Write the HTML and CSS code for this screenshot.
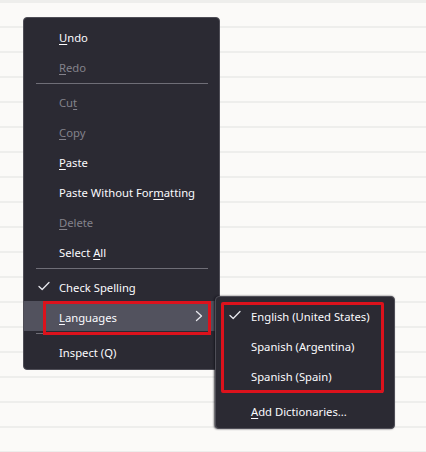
FILE: index.html
```html
<!DOCTYPE html>
<html lang="en">
<head>
<meta charset="utf-8">
<title>Context menu</title>
<link rel="stylesheet" href="styles.css">
</head>
<body>
<div class="canvas">
  <div class="menu main-menu">
    <div class="item"><span class="icon"></span><span class="label"><u>U</u>ndo</span></div>
    <div class="item disabled"><span class="icon"></span><span class="label"><u>R</u>edo</span></div>
    <div class="sep"></div>
    <div class="item disabled"><span class="icon"></span><span class="label">Cu<u>t</u></span></div>
    <div class="item disabled"><span class="icon"></span><span class="label"><u>C</u>opy</span></div>
    <div class="item"><span class="icon"></span><span class="label"><u>P</u>aste</span></div>
    <div class="item"><span class="icon"></span><span class="label">Paste Without For<u>m</u>atting</span></div>
    <div class="item disabled"><span class="icon"></span><span class="label"><u>D</u>elete</span></div>
    <div class="item"><span class="icon"></span><span class="label">Select <u>A</u>ll</span></div>
    <div class="sep"></div>
    <div class="item"><span class="icon"><svg class="check" width="12" height="12" viewBox="0 0 12 12"><polyline points="1,6.5 4.2,9.5 11,2.5"/></svg></span><span class="label">Check Spelling</span></div>
    <div class="item active marked"><span class="icon"></span><span class="label"><u>L</u>anguages</span><svg class="chevron" width="8" height="12" viewBox="0 0 8 12"><polyline points="1.5,1.5 6.5,6 1.5,10.5"/></svg></div>
    <div class="sep"></div>
    <div class="item"><span class="icon"></span><span class="label">Inspect (Q)</span></div>
  </div>

  <div class="menu sub-menu">
    <div class="group marked-group">
      <div class="item"><span class="icon"><svg class="check" width="12" height="12" viewBox="0 0 12 12"><polyline points="1,6.5 4.2,9.5 11,2.5"/></svg></span><span class="label">English (United States)</span></div>
      <div class="item"><span class="icon"></span><span class="label">Spanish (Argentina)</span></div>
      <div class="item"><span class="icon"></span><span class="label">Spanish (Spain)</span></div>
    </div>
    <div class="sep"></div>
    <div class="item"><span class="icon"></span><span class="label"><u>A</u>dd Dictionaries...</span></div>
  </div>
</div>
</body>
</html>
```
FILE: styles.css
```css
html, body {
  margin: 0;
  padding: 0;
}
body {
  width: 426px;
  height: 452px;
  overflow: hidden;
  background-color: #fbfaf8;
  background-image: repeating-linear-gradient(to bottom, #eeeeec 0, #eeeeec 2px, transparent 2px, transparent 25px);
  background-position: 0 1px;
  font-family: "Noto Sans", "Open Sans", sans-serif;
  font-size: 11.25px;
}
.canvas {
  position: relative;
  width: 426px;
  height: 452px;
}
.menu {
  position: absolute;
  box-sizing: border-box;
  background: #2b2a33;
  border: 1px solid #4f4e57;
  border-radius: 4px;
  padding: 3px 0;
  color: #fbfbfe;
  display: flex;
  flex-direction: column;
}
.main-menu {
  left: 23px;
  top: 17px;
  width: 197px;
}
.sub-menu {
  left: 215px;
  top: 296px;
  width: 180px;
  box-shadow: -1px 0 2px rgba(20, 19, 26, 0.8);
}
.item {
  position: relative;
  display: flex;
  align-items: center;
  height: 30px;
  padding-right: 16px;
  white-space: nowrap;
}
.item .icon {
  width: 35px;
  flex: 0 0 35px;
  box-sizing: border-box;
  padding-left: 14px;
  display: flex;
  align-items: center;
}
.sub-menu .item .icon {
  padding-left: 13px;
}
.item .label {
  flex: 1;
  line-height: 16px;
  padding-top: 3px;
}
.item u {
  text-decoration-thickness: 1px;
  text-underline-offset: 2px;
}
.item.disabled {
  color: #83828b;
}
.item.active {
  background: #52525e;
}
.check polyline,
.chevron polyline {
  fill: none;
  stroke: #e8e8ee;
  stroke-width: 1.3;
  stroke-linecap: round;
  stroke-linejoin: round;
}
.chevron {
  flex: 0 0 8px;
}
.sep {
  height: 1px;
  margin: 2px 11px 2px 12px;
  background: #6f6e77;
}
.marked::after {
  content: "";
  position: absolute;
  left: 19px;
  top: 0;
  width: 168px;
  height: 34px;
  box-sizing: border-box;
  border: 3px solid #dc121c;
}
.group {
  position: relative;
}
.marked-group::after {
  content: "";
  position: absolute;
  left: 5px;
  top: 2px;
  width: 163px;
  height: 91px;
  box-sizing: border-box;
  border: 3px solid #dc121c;
  border-radius: 2px;
}
```
